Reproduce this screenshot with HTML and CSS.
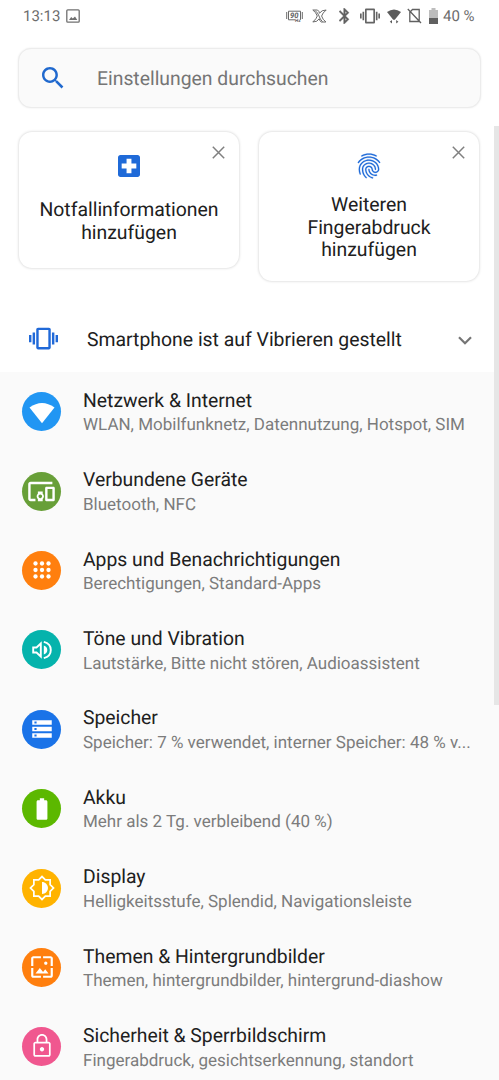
FILE: index.html
```html
<!DOCTYPE html>
<html lang="de">
<head>
<meta charset="utf-8">
<title>Einstellungen</title>
<link rel="stylesheet" href="styles.css">
</head>
<body>
<div class="screen">
  <header class="status">
    <span class="clock">13:13</span>
    <svg class="st-image" viewBox="0 0 14 14" width="14" height="14"><rect x=".8" y=".8" width="12.4" height="12.4" rx="1" fill="none" stroke="#707070" stroke-width="1.3"/><path d="M3 11l2.2-3 1.6 1.6L9 7.500l2.300 3.500z" fill="#707070"/></svg>
    <div class="tray">
      <svg class="i90" viewBox="0 0 17 14" width="17" height="14"><path d="M9 10.800H2.500V2.200h12v8.600" fill="none" stroke="#6a6a6a"/><path d="M.7 3v7M16.300 3v7" stroke="#6a6a6a"/><text x="4" y="9.300" class="tiny">90</text><text x="9" y="13.300" class="hz">Hz</text></svg>
      <svg class="ix" viewBox="0 0 15 14" width="15" height="14"><path d="M.8 1h4.700q1.600 1 2 3.200Q9.500 1 14.200 1 10.500 4 9.600 7q1 3.500 4.300 6H9.300Q7.500 12 7.200 9.800 5.500 13 .8 13 4.700 9.500 5.300 7 4.200 3.500.8 1zM3 1.500q3 2.300 4 5.500t3.500 5.800" fill="none" stroke="#6a6a6a"/></svg>
      <svg class="ibt" viewBox="5 2 14 20" width="11" height="16"><path d="M17.710 7.710L12 2h-1v7.590L6.410 5 5 6.410 10.590 12 5 17.590 6.410 19 11 14.410V22h1l5.710-5.710-4.300-4.290 4.300-4.290zM13 5.830l1.880 1.880L13 9.590V5.830zm1.880 10.460L13 18.170v-3.760l1.880 1.880z" fill="#606060" stroke="#606060" stroke-width=".5"/></svg>
      <svg class="ivib" viewBox="0 0 24 24" width="20" height="20"><path d="M0 15h2V9H0v6zm3 2h2V7H3v10zm19-8v6h2V9h-2zm-3 8h2V7h-2v10zM16.500 3h-9C6.670 3 6 3.670 6 4.500v15c0 .83.67 1.500 1.500 1.500h9c.83 0 1.500-.67 1.500-1.500v-15c0-.83-.67-1.500-1.500-1.500zM16 19H8V5h8v14z" fill="#646464"/></svg>
      <svg class="iwifi" viewBox="0 0 14 15" width="14" height="15"><path d="M0 3Q7-2 14 3L7.800 10.800H6.200z" fill="#5c5c5c"/><path d="M5 11v3.600L2.800 12.800zM9.200 11v3.600l2.200-1.800z" fill="#5c5c5c"/></svg>
      <svg class="isim" viewBox="0 0 15 16" width="15" height="16"><path d="M5.500 1.500h6.700v12H2.800V4.200zM.8 1L14 15" fill="none" stroke="#606060" stroke-width="1.300"/></svg>
      <svg class="ibat" viewBox="0 0 9 16" width="9" height="16"><path d="M0 2h2.500V0h4v2H9v8H0z" fill="#bdbdbd"/><path d="M0 10h9v6H0z" fill="#606060"/></svg>
      <span class="pct">40 %</span>
    </div>
  </header>

  <div class="search">
    <svg viewBox="3 3 18 18" width="22" height="22"><path d="M15.500 14h-.79l-.28-.27C15.410 12.590 16 11.110 16 9.500 16 5.910 13.090 3 9.500 3S3 5.910 3 9.500 5.910 16 9.500 16c1.610 0 3.090-.59 4.230-1.570l.27.28v.79l5 4.990L20.490 19l-4.990-5zm-6 0C7.010 14 5 11.990 5 9.500S7.010 5 9.500 5 14 7.010 14 9.500 11.990 14 9.500 14z" fill="#2069ce"/></svg>
    <span>Einstellungen durchsuchen</span>
  </div>

  <section class="cards">
    <article class="card c1">
      <svg class="close" viewBox="0 0 13 13" width="13" height="13"><path d="M.8.8l11.400 11.400M12.200.8L.8 12.200" stroke="#808080" stroke-width="1.500"/></svg>
      <svg class="cross" viewBox="3 3 18 18" width="22" height="22"><path d="M19 3H5c-1.100 0-1.990.9-1.990 2L3 19c0 1.100.9 2 2 2h14c1.100 0 2-.9 2-2V5c0-1.100-.9-2-2-2zm-1 11h-4v4h-4v-4H6v-4h4V6h4v4h4v4z" fill="#1f6ad8"/></svg>
      <p>Notfallinformationen<br>hinzufügen</p>
    </article>
    <article class="card c2">
      <svg class="close" viewBox="0 0 13 13" width="13" height="13"><path d="M.8.8l11.400 11.400M12.200.8L.8 12.200" stroke="#808080" stroke-width="1.500"/></svg>
      <svg class="finger" viewBox="0 0 24 24" width="30" height="30"><path d="M17.810 4.470c-.08 0-.16-.02-.23-.06C15.660 3.420 14 3 12.010 3c-1.980 0-3.860.47-5.570 1.410-.24.13-.54.04-.68-.2-.13-.24-.04-.55.2-.68C7.820 2.520 9.860 2 12.010 2c2.130 0 3.990.47 6.030 1.520.25.13.34.43.21.67-.09.18-.26.28-.44.28zM3.500 9.720c-.1 0-.2-.03-.29-.09-.23-.16-.28-.47-.12-.7.99-1.400 2.250-2.500 3.750-3.270C9.980 4.040 14 4.030 17.150 5.650c1.500.77 2.760 1.860 3.750 3.250.16.22.11.54-.12.7-.23.16-.54.11-.7-.12-.9-1.260-2.040-2.250-3.390-2.940-2.870-1.470-6.540-1.470-9.400.01-1.360.7-2.500 1.700-3.400 2.960-.08.14-.23.21-.39.21zm6.250 12.070c-.13 0-.26-.05-.35-.15-.87-.87-1.340-1.430-2.010-2.640-.69-1.230-1.050-2.730-1.050-4.340 0-2.970 2.540-5.390 5.660-5.390s5.660 2.420 5.660 5.390c0 .28-.22.5-.5.5s-.5-.22-.5-.5c0-2.420-2.090-4.390-4.660-4.390-2.570 0-4.660 1.970-4.660 4.390 0 1.440.32 2.770.93 3.850.64 1.150 1.080 1.640 1.850 2.420.19.2.19.51 0 .71-.11.1-.24.15-.37.15zm7.170-1.850c-1.190 0-2.240-.3-3.100-.89-1.490-1.010-2.380-2.650-2.380-4.390 0-.28.22-.5.5-.5s.5.22.5.5c0 1.410.72 2.740 1.940 3.560.71.48 1.540.71 2.540.71.24 0 .64-.03 1.040-.1.27-.05.53.13.58.41.05.27-.13.53-.41.58-.57.11-1.070.12-1.210.12zM14.910 22c-.04 0-.09-.01-.13-.02-1.590-.44-2.630-1.030-3.720-2.100-1.400-1.390-2.170-3.240-2.170-5.220 0-1.620 1.380-2.940 3.080-2.940 1.700 0 3.080 1.320 3.080 2.940 0 1.070.93 1.940 2.080 1.940s2.080-.87 2.080-1.940c0-3.770-3.250-6.830-7.250-6.830-2.840 0-5.440 1.580-6.610 4.030-.39.81-.59 1.760-.59 2.800 0 .78.07 2.010.67 3.610.1.260-.03.55-.29.64-.26.1-.55-.04-.64-.29-.49-1.310-.73-2.610-.73-3.960 0-1.200.23-2.290.68-3.240 1.330-2.790 4.280-4.600 7.510-4.600 4.550 0 8.250 3.510 8.250 7.830 0 1.620-1.380 2.940-3.080 2.940s-3.080-1.320-3.080-2.940c0-1.070-.93-1.940-2.080-1.940s-2.080.87-2.080 1.940c0 1.710.66 3.310 1.870 4.510.95.94 1.860 1.460 3.270 1.850.27.07.42.35.35.61-.05.23-.26.38-.47.38z" fill="#1f6ad8" stroke="#1f6ad8" stroke-width=".15"/></svg>
      <p>Weiteren<br>Fingerabdruck<br>hinzufügen</p>
    </article>
  </section>

  <div class="notice">
    <svg class="vib" viewBox="0 0 24 24" width="29" height="29"><path d="M0 15h2V9H0v6zm3 2h2V7H3v10zm19-8v6h2V9h-2zm-3 8h2V7h-2v10zM16.500 3h-9C6.670 3 6 3.670 6 4.500v15c0 .83.67 1.500 1.500 1.500h9c.83 0 1.500-.67 1.500-1.500v-15c0-.83-.67-1.500-1.500-1.500zM16 19H8V5h8v14z" fill="#2069d8"/></svg>
    <span>Smartphone ist auf Vibrieren gestellt</span>
    <svg class="chev" viewBox="0 0 14 9" width="14" height="9"><path d="M1 1.200l6 6 6-6" fill="none" stroke="#757575" stroke-width="2.200"/></svg>
  </div>

  <main class="list">
    <div class="row"><div class="dot blue"><svg viewBox="0 0 26 26"><path d="M.5 7.500Q13-1.500 25.500 7.500L13 23.200z" transform="translate(0 1)"/></svg></div><div class="txt"><h2>Netzwerk &amp; Internet</h2><p>WLAN, Mobilfunknetz, Datennutzung, Hotspot, SIM</p></div></div>
    <div class="row"><div class="dot olive"><svg class="wide" viewBox="0 0 24 24"><path d="M3 6h18V4H3c-1.100 0-2 .9-2 2v12c0 1.100.9 2 2 2h4v-2H3V6zm10 6H9v1.780c-.61.55-1 1.330-1 2.220s.39 1.670 1 2.220V20h4v-1.780c.61-.55 1-1.340 1-2.220s-.39-1.670-1-2.220V12zm-2 5.500c-.83 0-1.500-.67-1.500-1.500s.67-1.500 1.500-1.500 1.500.67 1.500 1.500-.67 1.500-1.500 1.500zM22 8h-6c-.5 0-1 .5-1 1v10c0 .5.5 1 1 1h6c.5 0 1-.5 1-1V9c0-.5-.5-1-1-1zm-1 10h-4v-8h4v8z"/></svg></div><div class="txt"><h2>Verbundene Geräte</h2><p>Bluetooth, NFC</p></div></div>
    <div class="row"><div class="dot orange"><svg viewBox="0 0 24 24"><circle cx="6" cy="6" r="2"/><circle cx="12" cy="6" r="2"/><circle cx="18" cy="6" r="2"/><circle cx="6" cy="12" r="2"/><circle cx="12" cy="12" r="2"/><circle cx="18" cy="12" r="2"/><circle cx="6" cy="18" r="2"/><circle cx="12" cy="18" r="2"/><circle cx="18" cy="18" r="2"/></svg></div><div class="txt"><h2>Apps und Benachrichtigungen</h2><p>Berechtigungen, Standard-Apps</p></div></div>
    <div class="row"><div class="dot teal"><svg viewBox="0 0 26 26"><path d="M4.200 10.500h3.300l4.300-4v13l-4.300-4H4.200z" fill="none" stroke="#fff" stroke-width="1.900"/><path d="M14.800 8.500q3.500 1.200 3.500 4.500t-3.500 4.500z"/><path d="M14.800 4.900q7 1.700 7 8.100t-7 8.100" fill="none" stroke="#fff" stroke-width="1.900"/></svg></div><div class="txt"><h2>Töne und Vibration</h2><p>Lautstärke, Bitte nicht stören, Audioassistent</p></div></div>
    <div class="row"><div class="dot royal"><svg viewBox="0 0 24 24"><path d="M3 20h18v-4H3v4zm2-3h2v2H5v-2zM3 4v4h18V4H3zm4 3H5V5h2v2zm-4 7h18v-4H3v4zm2-3h2v2H5v-2z"/></svg></div><div class="txt"><h2>Speicher</h2><p>Speicher: 7 % verwendet, interner Speicher: 48 % v...</p></div></div>
    <div class="row"><div class="dot green"><svg viewBox="0 0 24 24"><path d="M15.670 4H14V2h-4v2H8.330C7.600 4 7 4.600 7 5.330v15.330C7 21.400 7.600 22 8.330 22h7.330c.74 0 1.340-.6 1.340-1.330V5.330C17 4.600 16.400 4 15.670 4z"/></svg></div><div class="txt"><h2>Akku</h2><p>Mehr als 2 Tg. verbleibend (40 %)</p></div></div>
    <div class="row"><div class="dot amber"><svg viewBox="0 0 24 24"><path d="M19.500 15.100L22.600 12l-3.100-3.100V4.500h-4.400L12 1.400 8.900 4.500H4.500v4.400L1.400 12l3.100 3.100v4.400h4.400l3.100 3.100 3.100-3.100h4.400z" fill="none" stroke="#fff" stroke-width="1.600"/><path d="M12 6.500v11c3 0 5.500-2.500 5.500-5.500S15 6.500 12 6.500z"/></svg></div><div class="txt"><h2>Display</h2><p>Helligkeitsstufe, Splendid, Navigationsleiste</p></div></div>
    <div class="row"><div class="dot orange"><svg viewBox="0 0 24 24"><path d="M4 4h7V2H4c-1.100 0-2 .9-2 2v7h2V4zm6 9l-4 5h12l-3-4-2.030 2.710L10 13zm7-4.500c0-.83-.67-1.500-1.500-1.500S14 7.670 14 8.500s.67 1.500 1.500 1.500S17 9.330 17 8.500zM20 2h-7v2h7v7h2V4c0-1.100-.9-2-2-2zm0 18h-7v2h7c1.100 0 2-.9 2-2v-7h-2v7zM4 13H2v7c0 1.100.9 2 2 2h7v-2H4v-7z"/></svg></div><div class="txt"><h2>Themen &amp; Hintergrundbilder</h2><p>Themen, hintergrundbilder, hintergrund-diashow</p></div></div>
    <div class="row"><div class="dot pink"><svg class="lock" viewBox="0 0 24 24"><path d="M18 8h-1V6c0-2.760-2.240-5-5-5S7 3.240 7 6v2H6c-1.100 0-2 .9-2 2v10c0 1.100.9 2 2 2h12c1.100 0 2-.9 2-2V10c0-1.100-.9-2-2-2zM8.600 6c0-1.900 1.500-3.400 3.400-3.400s3.400 1.500 3.400 3.400v2H8.600V6zM18.400 20.400H5.600V9.600h12.800v10.800zM12 17c1.100 0 2-.9 2-2s-.9-2-2-2-2 .9-2 2 .9 2 2 2z"/></svg></div><div class="txt"><h2>Sicherheit &amp; Sperrbildschirm</h2><p>Fingerabdruck, gesichtserkennung, standort</p></div></div>
  </main>
  <div class="scrollbar"></div>
</div>
</body>
</html>
```
FILE: styles.css
```css
* { box-sizing: border-box; }
body { margin: 0; background: #fff; font-family: Roboto, sans-serif; color: #202020; text-rendering: geometricPrecision; }
p, h2 { margin: 0; font-weight: 400; }
svg { display: block; flex: none; }
.screen { position: relative; width: 499px; height: 1080px; overflow: hidden; }

.status { height: 48px; padding: 0 25px 16px 23px; display: flex; align-items: center; color: #6c6c6c; font-size: 15px; white-space: nowrap; }
.clock { width: 36px; }
.st-image { margin-left: 7px; }
.tray { margin-left: auto; display: flex; align-items: center; }
.ix { margin-left: 9px; }
.ibt { margin-left: 12px; }
.ivib { margin-left: 10px; }
.iwifi { margin-left: 7px; }
.isim { margin-left: 6px; }
.ibat { margin-left: 7px; }
.pct { width: 31px; margin-left: 5px; }
.tiny { font: italic bold 7.500px Roboto, sans-serif; fill: #606060; }
.hz { font: bold 4.500px Roboto, sans-serif; fill: #606060; }

.search { margin: 0 18px; height: 60px; display: flex; align-items: center; gap: 33px; padding-left: 23px; border: 1px solid #ececec; border-radius: 13px; background: #fafafa; box-shadow: 0 0 2px #e8e8e8; font-size: 19.350px; color: #757575; white-space: nowrap; }

.cards { display: flex; align-items: flex-start; gap: 20px; margin: 24px 19px 0; height: 174px; }
.card { position: relative; width: 220px; border-radius: 13px; box-shadow: 0 0 3px rgba(0,0,0,.22); display: flex; flex-direction: column; align-items: center; text-align: center; font-size: 19.400px; line-height: 22.500px; white-space: nowrap; }
.c1 { height: 136px; padding-top: 23px; }
.c2 { height: 149px; padding-top: 19px; }
.close { position: absolute; right: 14px; top: 14px; }
.cross { margin-bottom: 22px; }
.finger { margin-bottom: 13px; }

.notice { height: 66px; display: flex; align-items: center; padding: 0 27px 0 29px; font-size: 19.400px; white-space: nowrap; }
.notice span { margin-left: 29px; }
.vib { margin-bottom: 2px; }
.chev { margin-left: auto; margin-top: 3px; }

.list { background: #fafafa; height: 720px; }
.row { height: 79.400px; display: flex; align-items: center; padding: 0 20px 0 22px; }
.dot { width: 39px; height: 39px; border-radius: 50%; display: flex; align-items: center; justify-content: center; flex: none; }
.dot svg { width: 26px; height: 26px; fill: #fff; }
.dot .wide { width: 29px; height: 29px; }
.dot .lock { margin-bottom: 2px; }
.txt { margin-left: 22px; padding-top: 3px; white-space: nowrap; }
.txt h2 { font-size: 19.350px; line-height: 25px; }
.txt p { font-size: 17px; line-height: 25px; padding-top: .6px; color: #7c7c7c; }
.blue { background: #2196f3; }
.olive { background: #689f38; }
.orange { background: #ff7f0e; }
.teal { background: #05b3ac; }
.royal { background: #1a73e8; }
.green { background: #5cb800; }
.amber { background: #ffb300; }
.pink { background: #f0578f; }

.scrollbar { position: absolute; right: 0; top: 126px; width: 5px; height: 579px; background: #e6e6e6; }
```
